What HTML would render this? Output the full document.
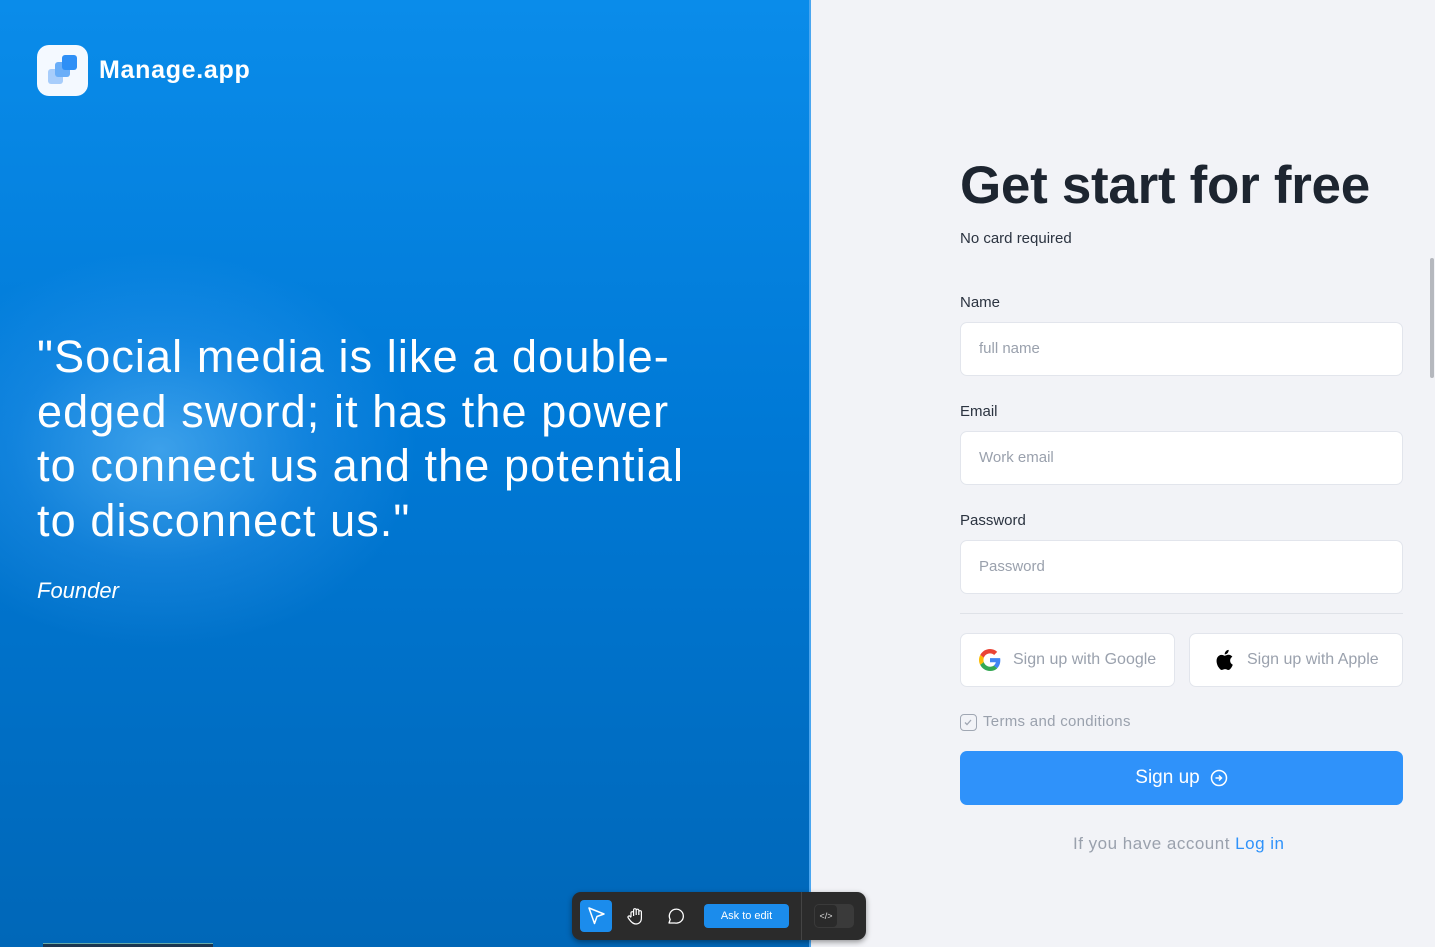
<!DOCTYPE html>
<html><head><style>
*{margin:0;padding:0;box-sizing:border-box}
body{width:1435px;height:947px;overflow:hidden;font-family:"Liberation Sans",sans-serif;background:#f2f3f7;position:relative}
.left{position:absolute;left:0;top:0;width:811px;height:947px;background:linear-gradient(180deg,#0a8cea 0%,#0079d6 45%,#0067b8 100%);border-right:2px solid #4aa6f0;overflow:hidden}
.glow{position:absolute;left:-100px;top:250px;width:520px;height:400px;border-radius:50%;background:radial-gradient(ellipse at center,rgba(120,200,255,.5) 0%,rgba(80,170,250,.22) 40%,rgba(0,120,220,0) 70%)}
.logo{position:absolute;left:37px;top:45px;width:51px;height:51px;background:#f4f9ff;border-radius:12px}
.brand{position:absolute;left:99px;top:56px;color:#fff;font-size:25px;font-weight:bold;letter-spacing:.7px}
.quote{position:absolute;left:37px;top:330px;color:#fff;font-size:45px;line-height:54.5px;white-space:nowrap;letter-spacing:1.1px}
.founder{position:absolute;left:37px;top:578px;color:#fff;font-size:22px;font-style:italic}
.h1{position:absolute;left:960px;top:155px;font-size:53px;color:#1d2530;font-weight:bold;letter-spacing:-.3px}
.sub{position:absolute;left:960px;top:230px;font-size:15px;color:#2b3340}
.lbl{position:absolute;left:960px;font-size:15px;color:#2b3340}
.inp{position:absolute;left:960px;width:443px;height:54px;background:#fff;border:1px solid #e2e5ec;border-radius:7px;padding-left:18px;line-height:52px;font-size:15px;color:#9aa1ad}
.btn2{position:absolute;top:633px;height:54px;background:#fff;border:1px solid #e2e5ec;border-radius:7px;font-size:16px;color:#9aa1ad;display:flex;align-items:center}
.sign{position:absolute;left:960px;top:751px;width:443px;height:54px;background:#2f92fa;border-radius:7px;color:#fff;font-size:19px;display:flex;align-items:center;justify-content:center;gap:10px}
.bar{position:absolute;left:572px;top:892px;width:294px;height:48px;background:#2b2b2b;border-radius:9px;box-shadow:0 2px 6px rgba(0,0,0,.4)}
</style></head><body>
<div class="left"><div class="glow"></div>
<div class="logo"><svg width="51" height="51"><rect x="11" y="24" width="15" height="15" rx="3" fill="#a7cdfb"/><rect x="18" y="17" width="15" height="15" rx="3" fill="#6aaef8"/><rect x="25" y="10" width="15" height="15" rx="3" fill="#2e8ff6"/></svg></div>
<div class="brand">Manage.app</div>
<div class="quote">"Social media is like a double-<br>edged sword; it has the power<br>to connect us and the potential<br>to disconnect us."</div>
<div class="founder">Founder</div>
<div style="position:absolute;left:43px;top:943px;width:170px;height:4px;background:#1b3550;border-top:1px solid #6aa"></div>
</div>
<div style="position:absolute;left:1430px;top:258px;width:4px;height:120px;background:#b5b8be;border-radius:2px"></div>
<div class="h1">Get start for free</div>
<div class="sub">No card required</div>
<div class="lbl" style="top:294px">Name</div>
<div class="inp" style="top:322px">full name</div>
<div class="lbl" style="top:403px">Email</div>
<div class="inp" style="top:431px">Work email</div>
<div class="lbl" style="top:512px">Password</div>
<div class="inp" style="top:540px">Password</div>
<div style="position:absolute;left:960px;top:613px;width:443px;height:1px;background:#dfe2e8"></div>
<div class="btn2" style="left:960px;width:215px;padding-left:18px"><svg width="22" height="22" viewBox="0 0 48 48" style="margin-right:12px"><path fill="#EA4335" d="M24 9.5c3.5 0 6.6 1.2 9 3.5l6.7-6.7C35.6 2.4 30.2 0 24 0 14.6 0 6.6 5.4 2.7 13.2l7.8 6C12.4 13.7 17.7 9.5 24 9.5z"/><path fill="#4285F4" d="M46.5 24.5c0-1.6-.1-3.1-.4-4.5H24v9h12.7c-.6 3-2.3 5.5-4.8 7.2l7.6 5.900c4.400-4.100 7-10.100 7-17.600z"/><path fill="#FBBC05" d="M10.5 28.8c-.5-1.5-.8-3.1-.8-4.8s.3-3.3.8-4.8l-7.8-6C1 16.5 0 20.1 0 24s1 7.5 2.7 10.8l7.8-6z"/><path fill="#34A853" d="M24 48c6.5 0 11.9-2.1 15.9-5.8l-7.6-5.9c-2.2 1.5-4.9 2.3-8.3 2.3-6.3 0-11.6-4.2-13.5-9.9l-7.8 6C6.6 42.6 14.6 48 24 48z"/></svg>Sign up with Google</div>
<div class="btn2" style="left:1189px;width:214px;padding-left:24px"><svg width="22" height="24" viewBox="0 0 24 24" style="margin-right:11px"><path fill="#000" d="M17.6 12.7c0-2.8 2.3-4.1 2.4-4.2-1.3-1.9-3.3-2.2-4-2.2-1.7-.2-3.3 1-4.2 1-.9 0-2.2-1-3.6-.9-1.8 0-3.5 1.1-4.5 2.7-1.9 3.3-.5 8.3 1.4 11 .9 1.3 2 2.8 3.4 2.8 1.4-.1 1.9-.9 3.6-.9s2.1.9 3.6.9c1.5 0 2.4-1.4 3.3-2.7 1-1.5 1.5-3 1.5-3.1-.1 0-2.9-1.1-2.9-4.4zM14.9 4.4c.7-.9 1.3-2.2 1.1-3.4-1.1 0-2.4.7-3.2 1.6-.7.8-1.3 2.1-1.1 3.3 1.2.1 2.4-.6 3.2-1.5z"/></svg>Sign up with Apple</div>
<div style="position:absolute;left:960px;top:714px;width:17px;height:17px;border:1.5px solid #a0a7b3;border-radius:4px"><svg width="14" height="14" style="position:absolute;left:0;top:0"><path d="M4 7.5l2 2 4-4.5" stroke="#a0a7b3" stroke-width="1.3" fill="none"/></svg></div>
<div style="position:absolute;left:983px;top:713px;font-size:15px;color:#9aa1ad;letter-spacing:.3px">Terms and conditions</div>
<div class="sign">Sign up <svg width="18" height="18" viewBox="0 0 18 18"><circle cx="9" cy="9" r="7.5" stroke="#fff" stroke-width="1.5" fill="none"/><path d="M5.5 9h6M9 6.5L11.5 9 9 11.5" stroke="#fff" stroke-width="1.5" fill="none"/></svg></div>
<div style="position:absolute;left:1073px;top:834px;font-size:17px;color:#9aa1ad;letter-spacing:.5px">If you have account <span style="color:#2f92fa">Log in</span></div>
<div class="bar">
<div style="position:absolute;left:8px;top:8px;width:32px;height:32px;background:#1b8cec;border-radius:4px"><svg width="32" height="32"><path d="M9 8l15 6-7 2.5-2.5 7z" stroke="#fff" stroke-width="1.5" fill="none" stroke-linejoin="round"/></svg></div>
<svg style="position:absolute;left:52px;top:12px" width="24" height="24"><path d="M7 13V9a1.3 1.3 0 012.6 0v3M9.6 11V6a1.3 1.3 0 012.6 0v5M12.2 10V6.5a1.3 1.3 0 012.6 0V11M14.8 10.5V8a1.3 1.3 0 012.6 0v6c0 4-2.5 6-5.5 6S7 18 5 15l-1-1.5a1.2 1.2 0 012-1.2L7 13.5" stroke="#fff" stroke-width="1.2" fill="none"/></svg>
<svg style="position:absolute;left:93px;top:14px" width="20" height="20"><path d="M4 17l1.2-3.5A7 7 0 1110 17z" stroke="#fff" stroke-width="1.3" fill="none" stroke-linejoin="round"/></svg>
<div style="position:absolute;left:132px;top:12px;width:85px;height:24px;background:#1b8cec;border-radius:4px;color:#fff;font-size:11px;line-height:24px;text-align:center">Ask to edit</div>
<div style="position:absolute;left:229px;top:0;width:1px;height:48px;background:#444"></div>
<div style="position:absolute;left:242px;top:12px;width:40px;height:24px;background:#3a3a3a;border-radius:5px"><div style="width:22px;height:22px;margin:1px;background:#2a2a2a;border-radius:4px;color:#ddd;font-size:9px;line-height:22px;text-align:center">&lt;/&gt;</div></div>
</div>
</body></html>
